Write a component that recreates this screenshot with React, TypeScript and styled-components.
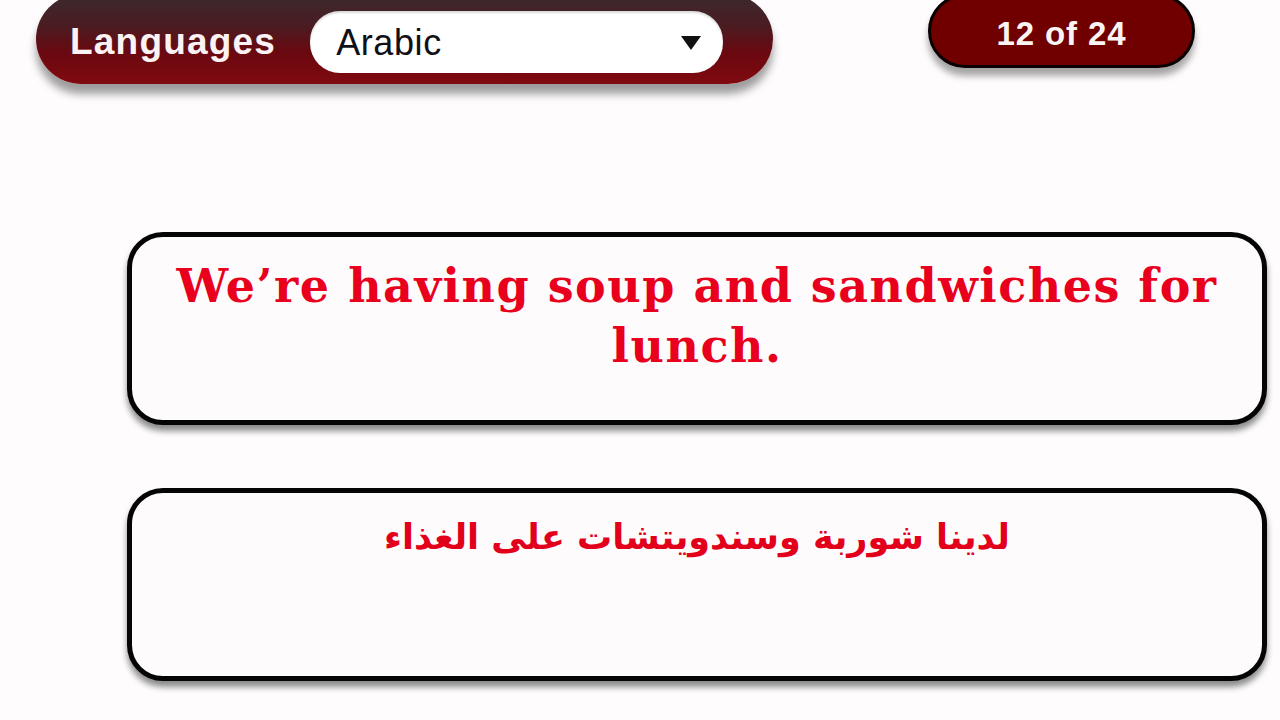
import React from "react";
import styled, { createGlobalStyle } from "styled-components";

const GlobalStyle = createGlobalStyle`
  html, body {
    margin: 0;
    padding: 0;
    background: #fefcfd;
    overflow: hidden;
  }
`;

const Page = styled.div`
  width: 1280px;
  height: 720px;
  display: flex;
  flex-direction: column;
  font-family: "Liberation Sans", Arial, sans-serif;
`;

const TopBar = styled.div`
  display: flex;
  align-items: flex-start;
  justify-content: space-between;
  padding: 0 85px 0 36px;
  margin-top: -6px;
`;

const LanguageBar = styled.div`
  width: 737px;
  height: 90px;
  box-sizing: border-box;
  border-radius: 45px;
  background: linear-gradient(to bottom, #3a2a2e 0%, #4a1c22 35%, #6a0810 65%, #800a10 100%);
  box-shadow: 0 10px 8px rgba(0, 0, 0, 0.38);
  display: flex;
  align-items: center;
  padding: 6px 50px 0 34px;
  gap: 34px;
`;

const Label = styled.span`
  color: #fbf3f3;
  font-family: "Liberation Sans", Arial, sans-serif;
  font-size: 37px;
  font-weight: bold;
  letter-spacing: 1.2px;
`;

const Select = styled.div`
  flex: 1;
  height: 60px;
  border-radius: 30px;
  background: #ffffff;
  box-shadow: inset 0 2px 2px rgba(0, 0, 0, 0.15);
  display: flex;
  align-items: center;
  justify-content: space-between;
  padding: 2px 22px 0 26px;
  color: #101018;
  font-family: "Liberation Sans", Arial, sans-serif;
  font-size: 36px;
  letter-spacing: 0.6px;
`;

const Caret = styled.svg`
  width: 20px;
  height: 14px;
`;

const Counter = styled.div`
  width: 267px;
  height: 74px;
  box-sizing: border-box;
  border: 3px solid #0a0000;
  border-radius: 37px;
  background: #700000;
  box-shadow: 0 8px 7px rgba(0, 0, 0, 0.35);
  display: flex;
  align-items: center;
  justify-content: center;
  padding-top: 5px;
  color: #fbf4f4;
  font-family: "Liberation Sans", Arial, sans-serif;
  font-size: 33px;
  font-weight: bold;
  letter-spacing: 0.9px;
`;

const Cards = styled.div`
  display: flex;
  flex-direction: column;
  gap: 63px;
  margin: 148px 0 0 127px;
  width: 1140px;
`;

const Card = styled.div<{ $pad: string }>`
  height: 193px;
  box-sizing: border-box;
  border: 5px solid #050505;
  border-radius: 36px;
  background: #fefbfc;
  box-shadow: 0 6px 6px rgba(0, 0, 0, 0.45);
  padding: ${(p) => p.$pad};
  text-align: center;
`;

const English = styled.p`
  margin: 0;
  color: #e8001c;
  font-family: "DejaVu Serif", "Liberation Serif", serif;
  font-weight: bold;
  font-size: 46px;
  line-height: 60px;
  letter-spacing: 1.5px;
`;

const Arabic = styled.p`
  margin: 0;
  color: #e2001a;
  font-family: "DejaVu Sans", "Noto Sans", sans-serif;
  font-weight: bold;
  font-size: 35px;
  line-height: 44px;
  direction: rtl;
`;

export default function App() {
  return (
    <Page>
      <GlobalStyle />
      <TopBar>
        <LanguageBar>
          <Label>Languages</Label>
          <Select>
            <span>Arabic</span>
            <Caret viewBox="0 0 20 14">
              <path d="M0 0 H20 L10 14 Z" fill="#111" />
            </Caret>
          </Select>
        </LanguageBar>
        <Counter>12 of 24</Counter>
      </TopBar>
      <Cards>
        <Card $pad="19px 20px 0">
          <English>We’re having soup and sandwiches for lunch.</English>
        </Card>
        <Card $pad="22px 20px 0">
          <Arabic>لدينا شوربة وسندويتشات على الغذاء</Arabic>
        </Card>
      </Cards>
    </Page>
  );
}
